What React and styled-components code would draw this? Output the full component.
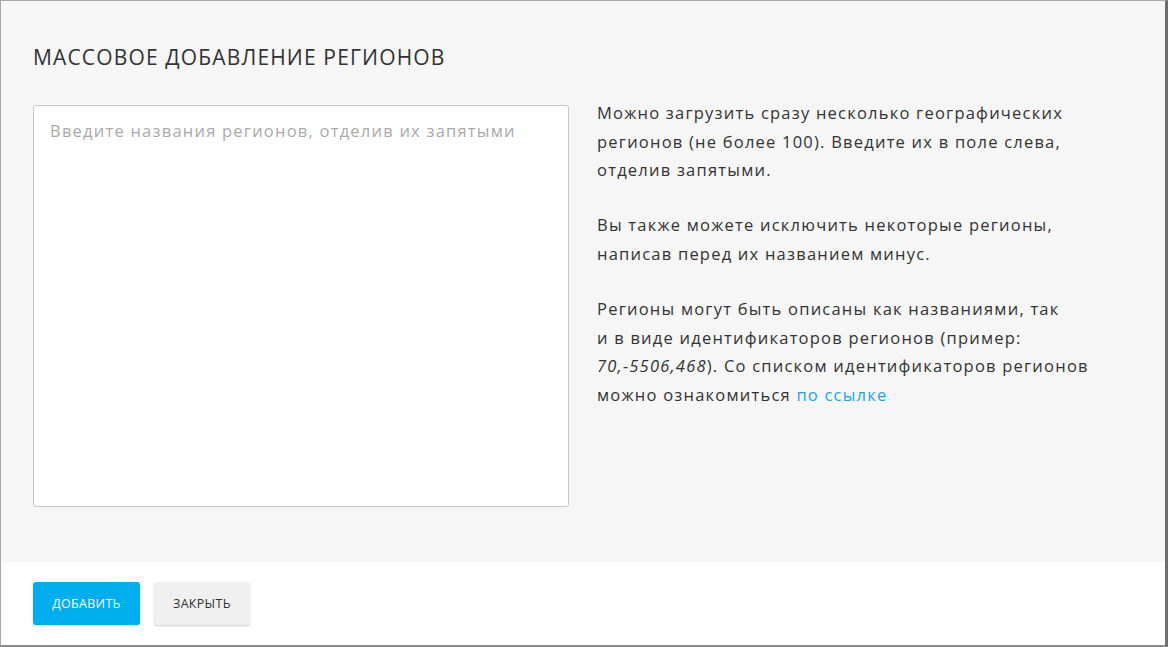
import React from 'react'
import styled, { createGlobalStyle } from 'styled-components'

const Global = createGlobalStyle`
  html, body {
    margin: 0;
    padding: 0;
    background: #fff;
  }
  body {
    font-family: "Open Sans", "Noto Sans", sans-serif;
    color: #333;
  }
`

const Modal = styled.div`
  width: 1168px;
  height: 647px;
  box-sizing: border-box;
  border: 1px solid #a8a8a8;
  border-right: 3px solid #6e6e6e;
  border-bottom: 2px solid #8a8a8a;
  display: flex;
  flex-direction: column;
  background: #fff;
`

const Body = styled.div`
  background: #f6f6f6;
  padding: 42px 32px 55px;
  flex: none;
`

const Title = styled.h2`
  margin: 0 0 34px;
  font-size: 21px;
  font-weight: 400;
  line-height: 28px;
  color: #333;
  text-transform: uppercase;
  letter-spacing: 1.15px;
`

const Columns = styled.div`
  display: flex;
  gap: 28px;
  align-items: flex-start;
`

const Area = styled.textarea`
  width: 536px;
  height: 402px;
  box-sizing: border-box;
  resize: none;
  border: 1px solid #c8c8c8;
  border-radius: 3px;
  background: #fff;
  padding: 13px 16px;
  font-family: "Open Sans", "Noto Sans", sans-serif;
  font-size: 16.5px;
  letter-spacing: 1.22px;
  line-height: 24px;
  color: #333;
  outline: none;
  &::placeholder {
    color: #aaa;
  }
`

const Help = styled.div`
  width: 530px;
  margin-top: -6px;
  font-size: 16.5px;
  letter-spacing: 1.22px;
  line-height: 28.6px;
  color: #333;
  & > p {
    margin: 0 0 26.5px;
  }
  & > p:last-child {
    margin-bottom: 0;
  }
  & em {
    font-style: italic;
  }
  & a {
    color: #16a6e6;
    text-decoration: none;
  }
`

const Footer = styled.div`
  flex: 1;
  padding: 20px 32px;
  display: flex;
  gap: 14px;
  align-items: flex-start;
`

const Button = styled.button`
  height: 43px;
  width: ${p => (p.$primary ? 107 : 96)}px;
  padding: 0;
  border: none;
  border-radius: 3px;
  font-family: "Open Sans", "Noto Sans", sans-serif;
  font-size: 12.5px;
  font-weight: 500;
  letter-spacing: 0.3px;
  text-transform: uppercase;
  cursor: pointer;
  background: ${p => (p.$primary ? '#00aeef' : '#f0f0f0')};
  color: ${p => (p.$primary ? '#fff' : '#333')};
  box-shadow: 0 1px 2px rgba(0, 0, 0, ${p => (p.$primary ? 0.15 : 0.2)});
`

export default function App() {
  return (
    <>
      <Global />
      <Modal>
        <Body>
          <Title>Массовое добавление регионов</Title>
          <Columns>
            <Area placeholder="Введите названия регионов, отделив их запятыми" />
            <Help>
              <p>
                Можно загрузить сразу несколько географических
                <br />
                регионов (не более 100). Введите их в поле слева,
                <br />
                отделив запятыми.
              </p>
              <p>
                Вы также можете исключить некоторые регионы,
                <br />
                написав перед их названием минус.
              </p>
              <p>
                Регионы могут быть описаны как названиями, так
                <br />
                и в виде идентификаторов регионов (пример:
                <br />
                <em>70,-5506,468</em>). Со списком идентификаторов регионов
                <br />
                можно ознакомиться <a href="#">по ссылке</a>
              </p>
            </Help>
          </Columns>
        </Body>
        <Footer>
          <Button $primary>Добавить</Button>
          <Button>Закрыть</Button>
        </Footer>
      </Modal>
    </>
  )
}
